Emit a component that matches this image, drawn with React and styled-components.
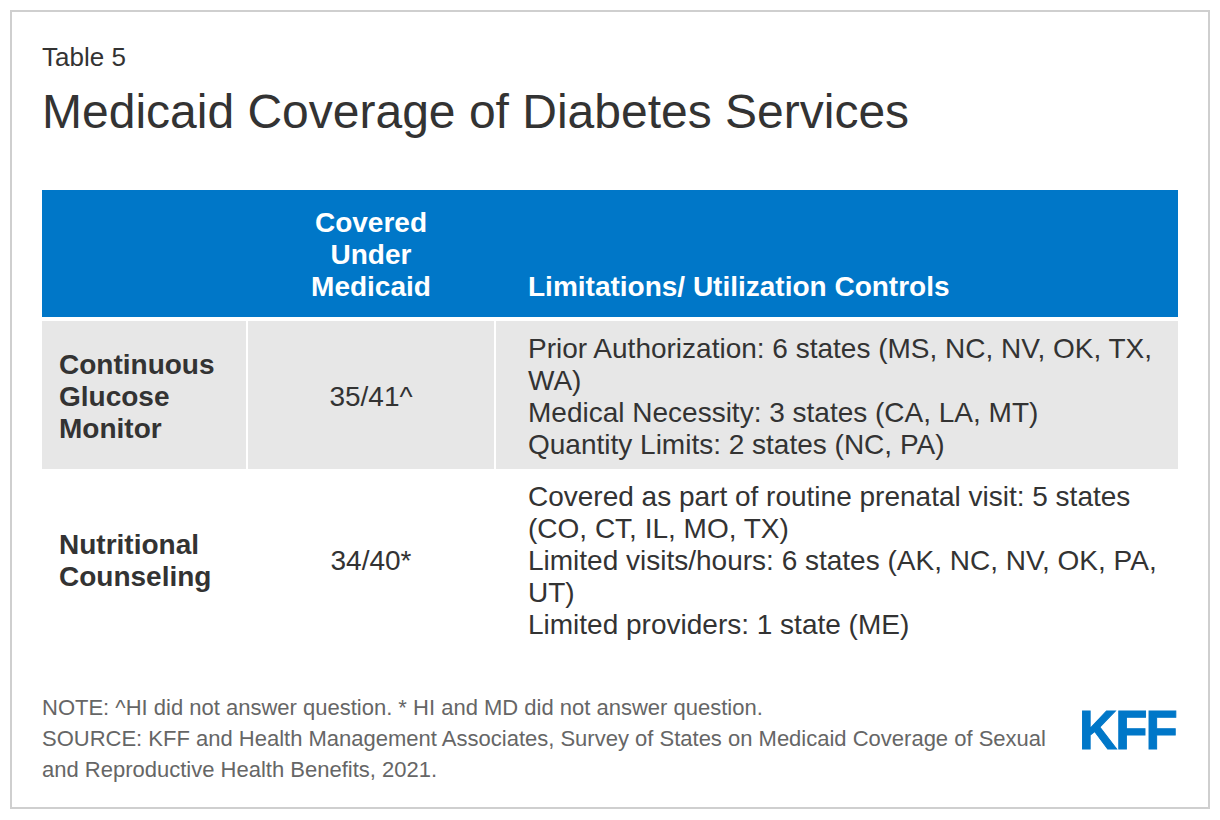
import React from 'react';
import styled, { createGlobalStyle } from 'styled-components';

const GlobalStyle = createGlobalStyle`
  html, body {
    margin: 0;
    padding: 0;
    background: #fff;
  }
  body {
    font-family: 'Liberation Sans', Arial, sans-serif;
    color: #333;
  }
`

const Frame = styled.div`
  box-sizing: border-box;
  width: 1200px;
  height: 799px;
  margin: 10px;
  border: 2px solid #cfcfcf;
  padding: 30px 30px 0 30px;
  display: flex;
  flex-direction: column;
`

const Kicker = styled.div`
  font-size: 26px;
  line-height: 30px;
  color: #333;
`

const Title = styled.h1`
  margin: 14px 0 0 0;
  font-size: 48px;
  font-weight: 400;
  line-height: 52px;
  color: #333;
`

const Table = styled.div`
  margin-top: 52px;
  width: 1136px;
  display: flex;
  flex-direction: column;
`

const Row = styled.div`
  display: grid;
  grid-template-columns: 204px 246px 1fr;
  column-gap: 2px;
  background: ${p => p.$bg || 'transparent'};
  margin-bottom: ${p => (p.$head ? '4px' : '0')};
`

const Head = styled.div`
  color: #fff;
  font-weight: 700;
  font-size: 28px;
  line-height: 32px;
  padding: 17px 0 14px ${p => (p.$center ? '0' : '32px')};
  text-align: ${p => (p.$center ? 'center' : 'left')};
  display: flex;
  flex-direction: column;
  justify-content: flex-end;
`

const Cell = styled.div`
  background: ${p => (p.$shade ? '#e7e7e7' : '#fff')};
  font-size: 28px;
  line-height: 32px;
  color: #333;
  padding: 12px ${p => p.$padR}px 8px ${p => p.$padL}px;
  display: flex;
  flex-direction: column;
  justify-content: center;
  text-align: ${p => (p.$center ? 'center' : 'left')};
  font-weight: ${p => (p.$bold ? 700 : 400)};
`

const Footer = styled.div`
  margin-top: auto;
  padding-bottom: 22px;
  display: flex;
  align-items: flex-start;
  justify-content: space-between;
  width: 1136px;
`

const Notes = styled.div`
  font-size: 22px;
  line-height: 31px;
  color: #666;
  width: 1020px;
`

const Logo = styled.div`
  margin-top: 16px;
  margin-right: 2px;
  font-family: 'Liberation Sans', Arial, sans-serif;
  font-weight: 700;
  font-size: 55px;
  line-height: 44px;
  letter-spacing: -2px;
  color: #0077c8;
  -webkit-text-stroke: 1px #0077c8;
  transform: scaleX(0.96);
  transform-origin: right center;
`

const rows = [
  {
    name: 'Continuous Glucose Monitor',
    covered: '35/41^',
    limits: [
      'Prior Authorization: 6 states (MS, NC, NV, OK, TX, WA)',
      'Medical Necessity: 3 states (CA, LA, MT)',
      'Quantity Limits: 2 states (NC, PA)',
    ],
  },
  {
    name: 'Nutritional Counseling',
    covered: '34/40*',
    limits: [
      'Covered as part of routine prenatal visit: 5 states (CO, CT, IL, MO, TX)',
      'Limited visits/hours: 6 states (AK, NC, NV, OK, PA, UT)',
      'Limited providers: 1 state (ME)',
    ],
  },
]

const App = () => {
  return (
    <>
      <GlobalStyle />
      <Frame>
        <Kicker>Table 5</Kicker>
        <Title>Medicaid Coverage of Diabetes Services</Title>

        <Table>
          <Row $bg='#0077c8' $head>
            <Head />
            <Head $center>
              <span>Covered</span>
              <span>Under</span>
              <span>Medicaid</span>
            </Head>
            <Head>Limitations/ Utilization Controls</Head>
          </Row>

          {rows.map((row, i) => (
            <Row key={row.name}>
              <Cell $shade={i % 2 === 0} $bold $padL={17} $padR={8}>{row.name}</Cell>
              <Cell $shade={i % 2 === 0} $center $padL={0} $padR={0}>{row.covered}</Cell>
              <Cell $shade={i % 2 === 0} $padL={32} $padR={0}>
                {row.limits.map(l => <div key={l}>{l}</div>)}
              </Cell>
            </Row>
          ))}
        </Table>

        <Footer>
          <Notes>
            NOTE: ^HI did not answer question. * HI and MD did not answer question.<br />
            SOURCE: KFF and Health Management Associates, Survey of States on Medicaid Coverage of Sexual and Reproductive Health Benefits, 2021.
          </Notes>
          <Logo>KFF</Logo>
        </Footer>
      </Frame>
    </>
  );
}

export default App;
